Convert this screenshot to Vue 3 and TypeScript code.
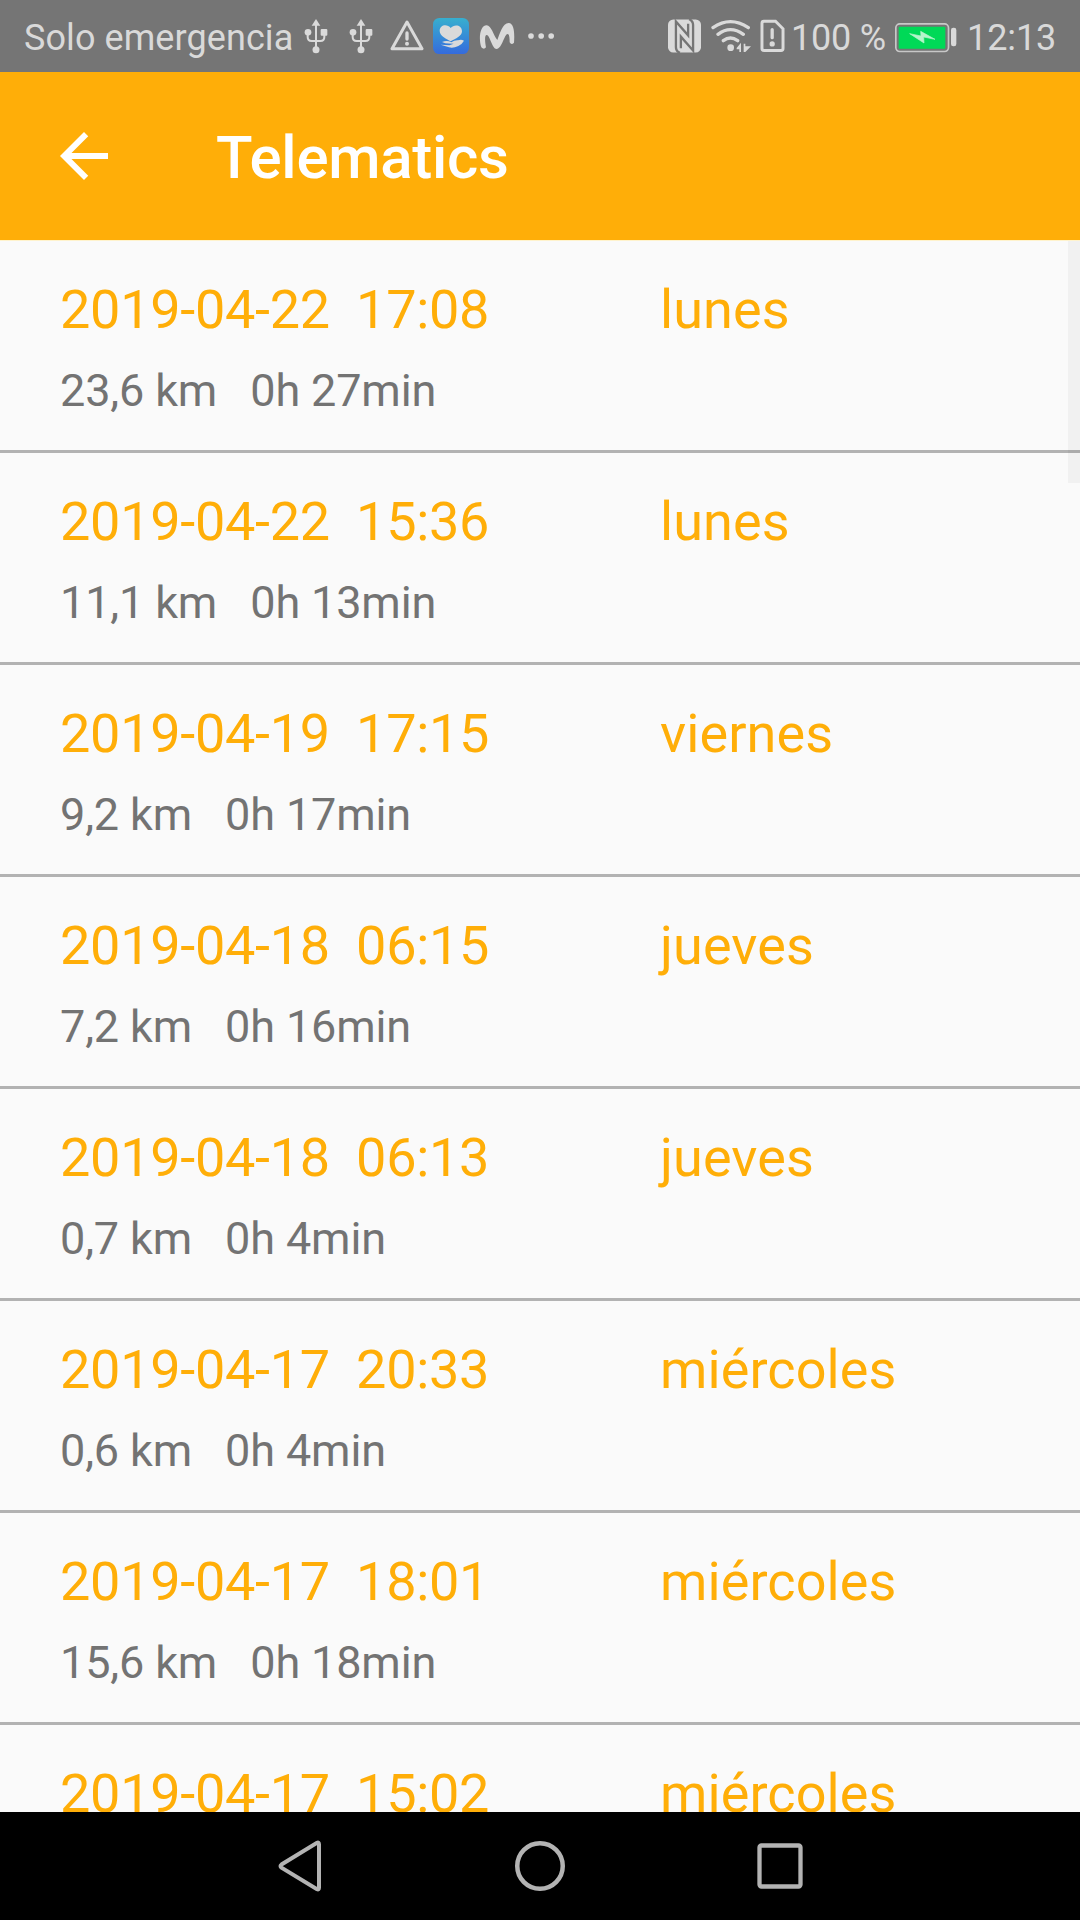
<script setup lang="ts">
interface Trip {
  date: string
  time: string
  day: string
  distance: string
  duration: string
}

const trips: Trip[] = [
  { date: '2019-04-22', time: '17:08', day: 'lunes', distance: '23,6 km', duration: '0h 27min' },
  { date: '2019-04-22', time: '15:36', day: 'lunes', distance: '11,1 km', duration: '0h 13min' },
  { date: '2019-04-19', time: '17:15', day: 'viernes', distance: '9,2 km', duration: '0h 17min' },
  { date: '2019-04-18', time: '06:15', day: 'jueves', distance: '7,2 km', duration: '0h 16min' },
  { date: '2019-04-18', time: '06:13', day: 'jueves', distance: '0,7 km', duration: '0h 4min' },
  { date: '2019-04-17', time: '20:33', day: 'miércoles', distance: '0,6 km', duration: '0h 4min' },
  { date: '2019-04-17', time: '18:01', day: 'miércoles', distance: '15,6 km', duration: '0h 18min' },
  { date: '2019-04-17', time: '15:02', day: 'miércoles', distance: '', duration: '' },
]
</script>

<template>
  <div class="screen">
    <div class="status">
      <span class="carrier">Solo emergencia</span>
      <svg v-for="n in 2" :key="n" class="usb" viewBox="0 0 72 108" fill="none" stroke="#dadada" stroke-width="6">
        <path d="M36 20V95M11 40V57Q11 69 23 69H49Q61 69 61 57V40" />
        <path d="M36 3L49 23H23Z" fill="#dadada" stroke="none" />
        <circle cx="36" cy="95" r="10.500" fill="#dadada" stroke="none" />
        <circle cx="12" cy="43" r="10" fill="#dadada" stroke="none" />
        <rect x="50" y="33" width="20" height="20" rx="3" fill="#dadada" stroke="none" />
      </svg>
      <svg class="warn" viewBox="0 0 102 108" fill="none" stroke="#dadada">
        <path d="M51 12L96 92H6Z" stroke-width="9" stroke-linejoin="round" />
        <path d="M51 45V63" stroke-width="10" stroke-linecap="round" />
        <circle cx="51" cy="77" r="6" fill="#dadada" stroke="none" />
      </svg>
      <svg class="health" viewBox="0 0 108 108">
        <defs>
          <linearGradient id="healthBg" x1="0" y1="0" x2="0" y2="1">
            <stop offset="0" stop-color="#37afcf" />
            <stop offset="1" stop-color="#356bdd" />
          </linearGradient>
        </defs>
        <rect width="108" height="108" rx="19" fill="url(#healthBg)" />
        <path d="M53 70C42 64 20 54 20 39C20 20 43 17 53 30C63 17 87 20 87 40C87 54 68 62 53 70Z" fill="#dadada" />
        <path d="M27 72Q43 66 55 73Q65 66 75 67Q84 63 93 68Q87 79 76 84Q61 91 48 88L23 80Q39 80 49 82L62 77Q46 77 37 76Z" fill="#dadada" />
      </svg>
      <svg class="movistar" viewBox="0 0 108 108">
        <path d="M7 88C-2 62 3 22 23 22C37 22 43 52 55 66C62 48 71 15 89 15C106 15 107 48 105 74Q97 82 92 73C92 58 91 48 85 48C77 48 68 93 53 93C39 93 33 51 23 51C16 51 18 73 21 88Q15 96 7 88Z" fill="#dadada" />
      </svg>
      <svg class="more" viewBox="0 0 78 24" fill="#dadada">
        <circle cx="9" cy="12" r="8.500" />
        <circle cx="39.500" cy="12" r="8.500" />
        <circle cx="69.500" cy="12" r="8.500" />
      </svg>
      <svg class="nfc" viewBox="0 0 100 102">
        <rect y="1" width="100" height="100" rx="16" fill="#dadada" />
        <path d="M36 102Q24 97 24 84V7L61 49V14" fill="none" stroke="#757575" stroke-width="7" />
        <path d="M64 0Q76 5 76 18V95L39 53V88" fill="none" stroke="#757575" stroke-width="7" />
      </svg>
      <svg class="wifi" viewBox="0 0 120 102" fill="none" stroke="#dadada" stroke-width="10" stroke-linecap="round">
        <path d="M6 26Q58-10 112 26M21 46Q58 18 97 46M37 65Q58 49 80 65" />
        <circle cx="59" cy="86" r="10" fill="#dadada" stroke="none" />
        <path d="M77 87L90 71V99H85V91H77ZM98 74H103V82H120L103 99H98Z" fill="#dadada" stroke="none" />
      </svg>
      <svg class="sim" viewBox="0 0 76 102" fill="none" stroke="#dadada">
        <path d="M12 6H47L70 29V89Q70 95 64 95H12Q6 95 6 89V12Q6 6 12 6Z" stroke-width="9" />
        <path d="M37 32V56" stroke-width="10" stroke-linecap="round" />
        <circle cx="37" cy="75" r="8" fill="#dadada" stroke="none" />
      </svg>
      <span class="percent">100 %</span>
      <svg class="battery" viewBox="0 0 186 90">
        <rect x="2.500" y="2.500" width="158" height="83" rx="12" fill="none" stroke="#c8c8c8" stroke-width="5" />
        <rect x="11" y="11" width="140" height="66" rx="3" fill="#00d957" />
        <path d="M44 32L78 39L77 25L120 49L86 42L87 60Z" fill="#b5f5cb" stroke="#b5f5cb" stroke-width="2" />
        <rect x="168" y="14" width="16" height="56" rx="7" fill="#dadada" />
      </svg>
      <span class="clock">12:13</span>
    </div>

    <header class="bar">
      <svg class="back" viewBox="0 0 24 24" fill="#fff">
        <path d="M20 11H7.830l5.590-5.590L12 4l-8 8 8 8 1.410-1.410L7.830 13H20v-2z" />
      </svg>
      <h1>Telematics</h1>
    </header>

    <main class="list">
      <div class="thumb"></div>
      <section v-for="(trip, i) in trips" :key="i" class="trip">
        <div class="when">
          <span class="stamp">{{ trip.date }}&nbsp; {{ trip.time }}</span>
          <span class="day">{{ trip.day }}</span>
        </div>
        <div v-if="trip.distance" class="detail">{{ trip.distance }}&nbsp;&nbsp; {{ trip.duration }}</div>
      </section>
    </main>

    <nav class="nav">
      <svg viewBox="0 0 60 60" fill="none" stroke="#b3b3b3" stroke-width="4">
        <path d="M11.500 28.500Q9.500 30 11.500 31.700L47 53.200Q49 54 49 51.500V8.500Q49 6 47 6.800Z" />
      </svg>
      <svg viewBox="0 0 60 60" fill="none" stroke="#b3b3b3" stroke-width="4.500">
        <circle cx="30" cy="30" r="22.750" />
      </svg>
      <svg viewBox="0 0 60 60" fill="none" stroke="#b3b3b3" stroke-width="4.300">
        <rect x="9.500" y="9.500" width="41" height="41" rx="2" />
      </svg>
    </nav>
  </div>
</template>

<style>
body {
  margin: 0;
}
</style>

<style scoped>
.screen {
  width: 1080px;
  height: 1920px;
  display: flex;
  flex-direction: column;
  overflow: hidden;
  background: #fafafa;
  font-family: Roboto, "Liberation Sans", sans-serif;
}
.status {
  height: 72px;
  flex: none;
  display: flex;
  align-items: center;
  background: #757575;
  color: #d9d9d9;
  font-size: 36px;
  line-height: 42px;
  white-space: nowrap;
}
.status svg {
  flex: none;
}
.carrier {
  width: 280px;
  flex: none;
  padding-left: 24px;
  padding-top: 4px;
  letter-spacing: 0.08px;
}
.usb {
  width: 24px;
  height: 36px;
  margin-right: 21px;
}
.warn {
  width: 34px;
  height: 36px;
  margin-left: -4px;
}
.health {
  width: 36px;
  height: 36px;
  margin-left: 9px;
}
.movistar {
  width: 36px;
  height: 36px;
  margin-left: 10px;
}
.more {
  width: 26px;
  height: 8px;
  margin-left: 13px;
}
.nfc {
  width: 33px;
  height: 34px;
  margin-left: 114px;
}
.wifi {
  width: 40px;
  height: 34px;
  margin-left: 10px;
}
.sim {
  width: 25px;
  height: 34px;
  margin-left: 9px;
}
.percent {
  width: 105px;
  flex: none;
  padding-left: 6px;
  padding-top: 4px;
  letter-spacing: -0.25px;
}
.battery {
  width: 62px;
  height: 30px;
  margin-top: 3px;
  margin-left: -1px;
}
.clock {
  padding-left: 10px;
  padding-top: 4px;
  letter-spacing: -0.1px;
}
.bar {
  box-sizing: border-box;
  height: 169px;
  flex: none;
  display: flex;
  align-items: center;
  background: #ffae08;
  border-bottom: 1px solid #fff3cd;
}
.back {
  width: 72px;
  height: 72px;
  margin-left: 48px;
}
h1 {
  margin: 4px 0 0 96px;
  font-size: 60px;
  line-height: 70px;
  font-weight: 500;
  letter-spacing: -0.27px;
  color: #fff;
}
.list {
  position: relative;
  flex: 1;
  min-height: 0;
  overflow: hidden;
}
.thumb {
  position: absolute;
  right: 0;
  top: 0;
  width: 12px;
  height: 242px;
  background: rgba(0, 0, 0, 0.035);
}
.trip {
  box-sizing: border-box;
  height: 212px;
  padding: 37px 60px 0;
  border-bottom: 3px solid #b2b2b2;
  white-space: nowrap;
}
.when {
  display: flex;
  color: #ffae08;
  font-size: 54px;
  line-height: 64px;
}
.stamp {
  width: 600px;
  letter-spacing: -0.28px;
}
.day {
  letter-spacing: 0.1px;
}
.detail {
  margin-top: 22px;
  color: #737373;
  font-size: 45px;
  line-height: 53px;
  letter-spacing: -0.14px;
}
.nav {
  height: 108px;
  flex: none;
  display: flex;
  align-items: center;
  justify-content: center;
  gap: 180px;
  background: #000;
}
.nav svg {
  width: 60px;
  height: 60px;
}
</style>
